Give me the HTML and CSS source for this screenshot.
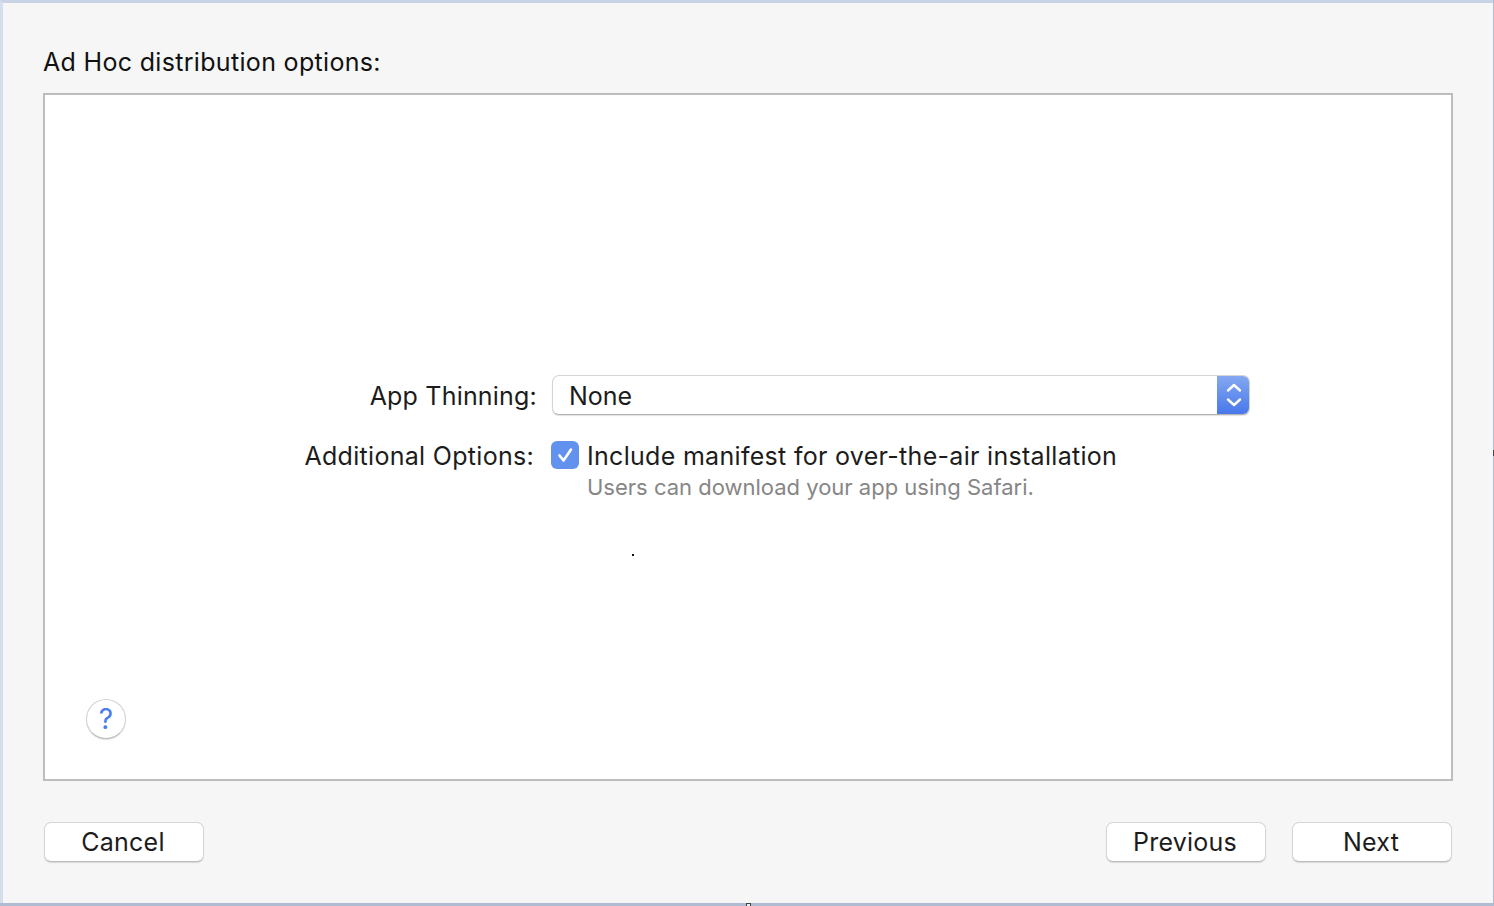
FILE: index.html
```html
<!DOCTYPE html>
<html lang="en">
<head>
  <meta charset="UTF-8">
  <title>Ad Hoc distribution options</title>
  <link rel="stylesheet" href="styles.css">
</head>
<body>
  <div class="sheet">
    <h1 class="title">Ad Hoc distribution options:</h1>

    <div class="panel">
      <div class="form">
        <div class="row">
          <div class="label label-thinning">App Thinning:</div>
          <div class="select">
            <span class="select-value">None</span>
            <span class="stepper">
              <svg width="16" height="26" viewBox="0 0 16 26">
                <path d="M2 8.5 L8 3 L14 8.5 M2 17.5 L8 23 L14 17.5" fill="none" stroke="#fff" stroke-width="2.4" stroke-linecap="round" stroke-linejoin="round"/>
              </svg>
            </span>
          </div>
        </div>
        <div class="row row-options">
          <div class="label label-options">Additional Options:</div>
          <div class="check-wrap">
            <span class="checkbox">
              <svg width="28" height="28" viewBox="0 0 28 28">
                <path d="M8.5 14.5 L12.5 19.5 L20 8.5" fill="none" stroke="#fff" stroke-width="2.6" stroke-linecap="round" stroke-linejoin="round"/>
              </svg>
            </span>
            <div class="check-text">
              <div class="check-label">Include manifest for over-the-air installation</div>
              <div class="check-note">Users can download your app using Safari.</div>
            </div>
          </div>
        </div>
      </div>

      <span class="dot"></span>

      <div class="help">?</div>
    </div>

    <div class="actions">
      <button class="btn">Cancel</button>
      <div class="actions-right">
        <button class="btn">Previous</button>
        <button class="btn">Next</button>
      </div>
    </div>
  </div>
  <span class="resize-handle"></span>
  <span class="edge-mark"></span>
</body>
</html>
```

FILE: styles.css
```css
html, body {
  margin: 0;
  height: 100%;
  overflow: hidden;
}

body {
  position: relative;
  background-color: #b0bcd2;
  font-family: Inter, "Liberation Sans", Arial, sans-serif;
  color: #1c1c1c;
}

/* sheet over the blurred window behind it */
.sheet {
  box-sizing: border-box;
  height: 903px;
  margin: 0 1px 0 0;
  padding: 0 40px 0 40px;
  background-color: #f6f6f6;
  border-top: 3px solid #c8d3e6;
  border-left: 3px solid #d3deef;
  display: flex;
  flex-direction: column;
}

.title {
  margin: 0;
  padding-top: 44px;
  height: 46px;
  font-size: 25px;
  line-height: 30px;
  letter-spacing: 0.32px;
  font-weight: normal;
  color: #111;
}

.panel {
  position: relative;
  box-sizing: border-box;
  height: 688px;
  width: 1410px;
  background: white;
  border: 2px solid #bdbdbd;
  display: flex;
  flex-direction: column;
}

/* form rows */
.form {
  padding-top: 280px;
  flex: 1;
}

.row {
  display: flex;
  align-items: center;
}

.row-options {
  align-items: flex-start;
  margin-top: 26px;
}

.label {
  width: 492px;
  text-align: right;
  font-size: 25px;
  line-height: 30px;
  letter-spacing: 0.3px;
}

.label-thinning {
  padding-top: 1px;
  letter-spacing: 0.2px;
}

.label-options {
  width: 489px;
}

.select {
  box-sizing: border-box;
  width: 698px;
  height: 40px;
  margin-left: 15px;
  background: white;
  border: 1px solid #d4d4d4;
  border-bottom-color: #b4b4b4;
  border-radius: 7px;
  box-shadow: 0 1px 1px rgba(0,0,0,0.12);
  display: flex;
  align-items: center;
  justify-content: space-between;
  overflow: hidden;
}

.select-value {
  padding: 1px 0 0 16px;
  font-size: 25px;
}

.stepper {
  width: 33px;
  height: 40px;
  margin-right: -1px;
  background: linear-gradient(#86a9f1, #4676ea);
  display: flex;
  align-items: center;
  justify-content: center;
}

.check-wrap {
  display: flex;
  margin-left: 17px;
}

.checkbox {
  width: 28px;
  height: 28px;
  border-radius: 6px;
  background: #6391ee;
}

.checkbox svg {
  display: block;
}

.check-text {
  margin-left: 8px;
}

.check-label {
  font-size: 25px;
  line-height: 30px;
  letter-spacing: 0.3px;
}

.check-note {
  font-size: 22px;
  line-height: 26px;
  margin-top: 3px;
  color: #868686;
}

.dot {
  position: absolute;
  left: 587px;
  top: 459px;
  width: 2px;
  height: 2px;
  background: #111;
}

/* help button, bottom left of the panel */
.help {
  box-sizing: border-box;
  width: 40px;
  height: 40px;
  margin: 0 0 40px 41px;
  background: white;
  border: 1px solid #d2d2d2;
  border-bottom-color: #bdbdbd;
  border-radius: 50%;
  box-shadow: 0 1px 1px rgba(0,0,0,0.12);
  color: #4a7bea;
  font-size: 28px;
  line-height: 38px;
  text-align: center;
}

.actions {
  display: flex;
  justify-content: space-between;
  margin-top: 41px;
  padding: 0 1px;
}

.actions-right {
  display: flex;
  gap: 26px;
}

.btn {
  box-sizing: border-box;
  width: 160px;
  height: 40px;
  padding: 0 2px 0 0;
  background: white;
  border: 1px solid #d6d6d6;
  border-bottom-color: #bcbcbc;
  border-radius: 7px;
  box-shadow: 0 1px 1px rgba(0,0,0,0.12);
  font-family: inherit;
  font-size: 25px;
  letter-spacing: 0.25px;
  color: #1c1c1c;
}

.resize-handle {
  position: absolute;
  left: 746px;
  top: 903px;
  width: 5px;
  height: 3px;
  background: #eee;
  border: 1px solid #444;
  border-bottom: none;
  box-sizing: border-box;
}

.edge-mark {
  position: absolute;
  left: 1493px;
  top: 450px;
  width: 1px;
  height: 6px;
  background: #444;
}
```
